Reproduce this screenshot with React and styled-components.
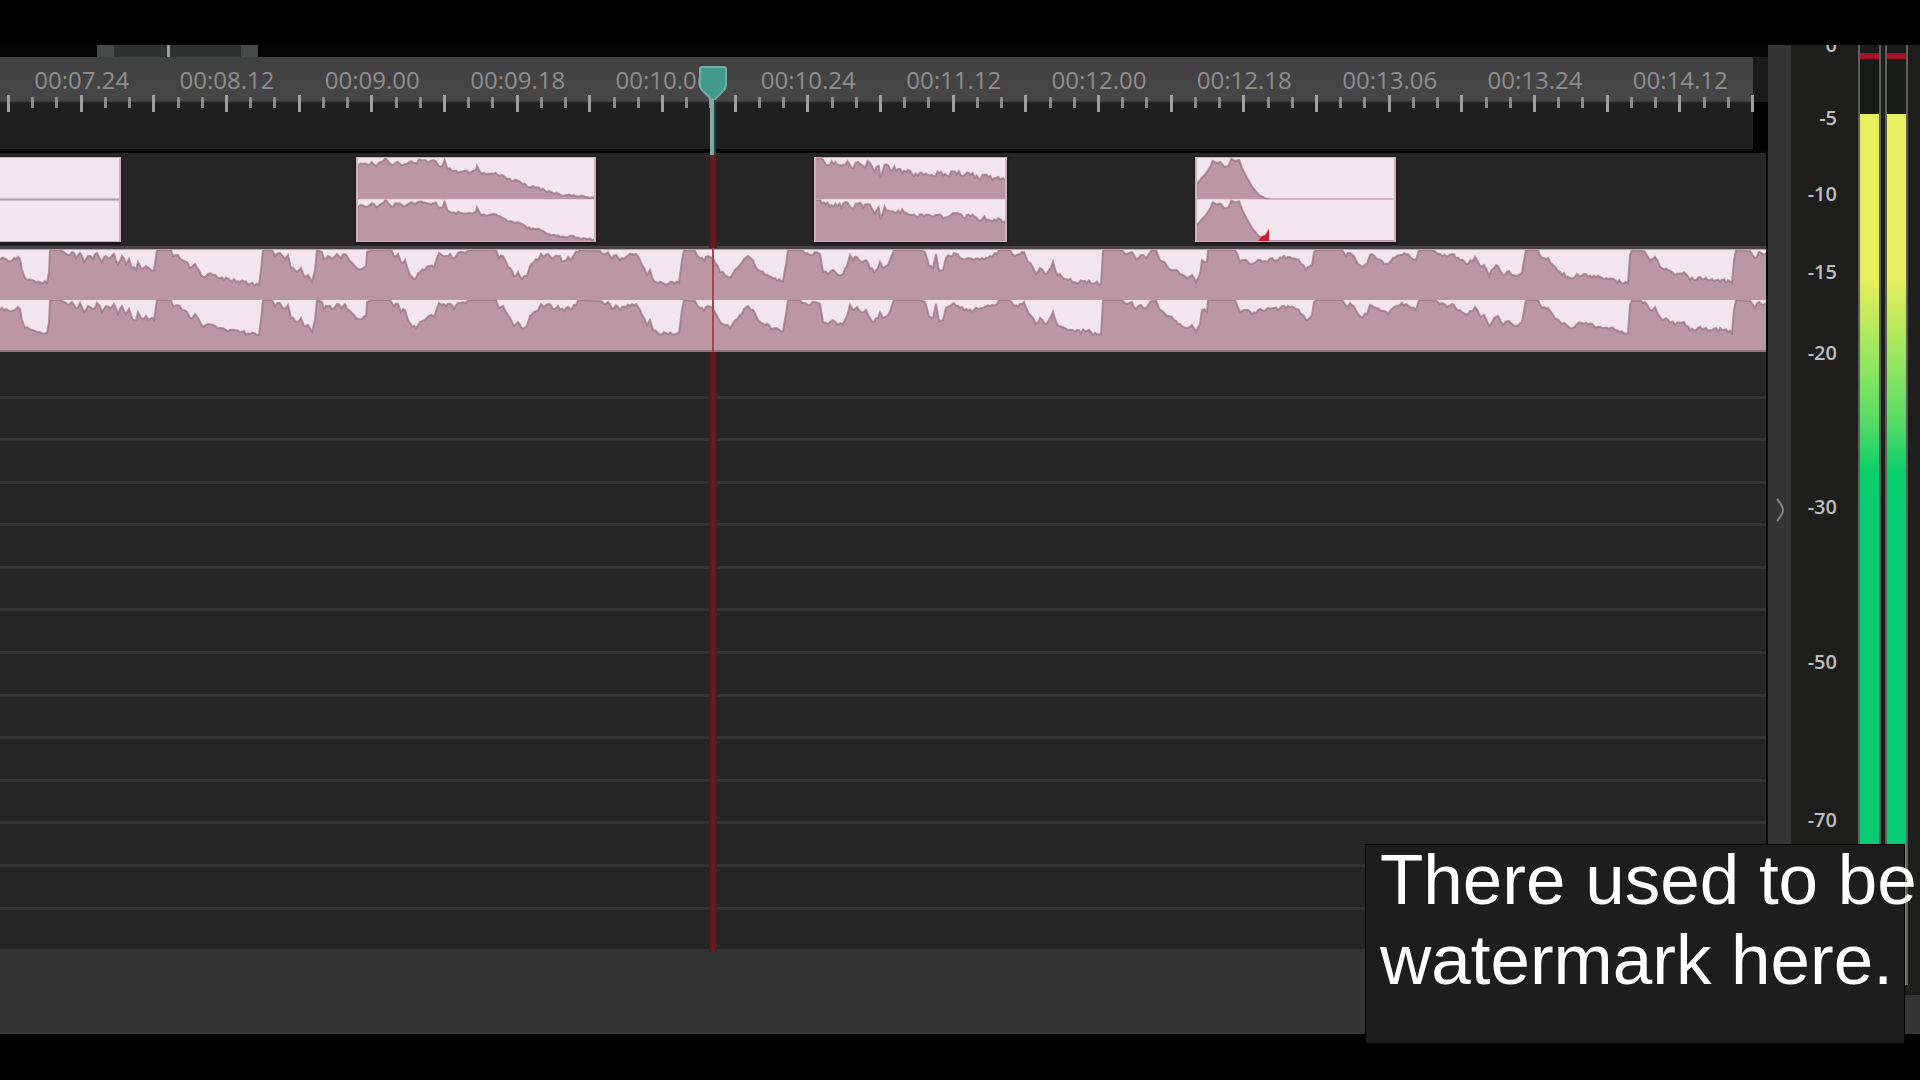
import React from "react";
import styled, { createGlobalStyle } from "styled-components";

const GlobalStyle = createGlobalStyle`
  * {
    box-sizing: border-box;
  }

  body {
    margin: 0;
    background: #000;
    font-family: "Open Sans", "Noto Sans", sans-serif;
  }
`;

const Page = styled.div`
  position: relative;
  display: flex;
  flex-direction: column;
  min-height: 100vh;
  padding: 45px 0 46px;
  background: #000;
  overflow: hidden;
`;

const Editor = styled.main`
  flex: 1;
  display: grid;
  grid-template-columns: 1fr 23px 129px;
  background: #353535;
`;

const Timeline = styled.section`
  position: relative;
  display: flex;
  flex-direction: column;
  min-width: 0;
  background: #060606;
`;

const Overview = styled.div`
  display: grid;
  grid-template-columns: 97fr 161fr 1510fr;
  height: 12px;
`;

const OverviewRange = styled.div`
  grid-column: 2;
  display: flex;
  justify-content: space-between;
  background: #303232;
`;

const Handle = styled.span`
  width: ${(props) => (props.$thin ? "3px" : "17px")};
  margin-right: ${(props) => (props.$thin ? "18px" : "0")};
  background: ${(props) => (props.$thin ? "#9a9a9a" : "#484a49")};
`;

const RulerRow = styled.div`
  display: flex;
  height: 92px;
  padding-right: 14px;
  background: linear-gradient(#1b1b1b 45px, #030303 45px);
`;

const Ruler = styled.div`
  flex: 1;
  display: grid;
  grid-template-columns: 9fr repeat(12, 145fr);
  background: linear-gradient(#414141, #464646 44px, #1f1f1f 46px);
`;

const RulerCell = styled.div`
  display: flex;
  flex-direction: column;
  align-items: center;
  min-width: 0;
`;

const Time = styled.span`
  height: 38px;
  line-height: 46px;
  font-size: 24px;
  color: #8e8e8e;
`;

const Ticks = styled.div`
  align-self: stretch;
  display: grid;
  grid-template-columns: repeat(6, 1fr);
`;

const Tick = styled.span`
  width: 3px;
  height: ${(props) => (props.$major ? "17px" : "11px")};
  margin-top: ${(props) => (props.$major ? "0" : "2px")};
  margin-left: -2px;
  background: ${(props) => (props.$major ? "#a0a0a0" : "#8a8a8a")};
`;

const LastTick = styled(Tick)`
  margin-top: 38px;
`;

const Tracks = styled.div`
  flex: 1;
  display: flex;
  flex-direction: column;
  margin-right: 2px;
  border-top: 4px solid #050505;
  background: #262626;
`;

const ClipTrack = styled.div`
  display: grid;
  grid-template-columns: 121fr 235fr 240fr 218fr 193fr 188fr 201fr 370fr;
  grid-template-rows: minmax(0, 1fr);
  height: 96px;
  padding: 4px 0 4px;
  border-bottom: 3px solid #4a4345;
`;

const Clip = styled.div`
  grid-column: ${(props) => props.$column};
  position: relative;
  border: solid #c9b4bd;
  border-width: ${(props) => (props.$cut ? "1px 2px 1px 0" : "1px 2px")};
  background: #f2e5ec;
  box-shadow: 0 1px 3px #150b10;
`;

const MusicTrack = styled.div`
  height: 103px;
  border-top: 1px solid #bca5ae;
  border-bottom: 2px solid #8f7480;
  background: #f2e5ec;
`;

const WaveSvg = styled.svg`
  display: block;
  width: 100%;
  height: 100%;
`;

const ClipMark = styled.svg`
  position: absolute;
  left: 31%;
  bottom: 0;
  width: 12px;
  height: 12px;
`;

const Lanes = styled.div`
  flex: 1;
  display: flex;
  flex-direction: column;
  padding-top: 4px;
`;

const Lane = styled.div`
  flex: 1;
  border-bottom: 3px solid #353535;
`;

const TimelineFooter = styled.div`
  height: 82px;
  background: #353535;
`;

const Playhead = styled.div`
  position: absolute;
  left: 40.3%;
  top: 21px;
  bottom: 82px;
  width: 30px;
  margin-left: -15px;
  display: flex;
  flex-direction: column;
  align-items: center;
  pointer-events: none;
`;

const HeadSvg = styled.svg`
  display: block;
  flex: none;
  width: 30px;
  height: 34px;
`;

const Stem = styled.span`
  width: 6px;
  height: 55px;
  border-right: 2px solid #1d4443;
  background: #85a5a3;
`;

const RedLine = styled.span`
  flex: ${(props) => (props.$height ? "none" : "1")};
  height: ${(props) => props.$height || "auto"};
  width: ${(props) => (props.$thin ? "2px" : "8px")};
  background: ${(props) =>
    props.$thin ? "#b03f58" : "linear-gradient(90deg, #3c2022, #741a22, #3c2022)"};
`;

const Splitter = styled.button`
  display: flex;
  align-items: center;
  justify-content: center;
  padding: 0 0 59px;
  border: 0;
  background: #353535;
  color: #858585;
`;

const MeterPanel = styled.aside`
  display: flex;
  flex-direction: column;
`;

const MeterBody = styled.div`
  flex: 1;
  display: flex;
  background: #1e1f1d;
`;

const Scale = styled.div`
  display: flex;
  flex-direction: column;
  width: 46px;
  margin-right: 21px;
  overflow: hidden;
`;

const ScaleStep = styled.div`
  flex: ${(props) => props.$size} 1 0;
  display: flex;
  align-items: flex-end;
  justify-content: flex-end;
  min-height: 0;
`;

const ScaleLabel = styled.span`
  height: 24px;
  line-height: 24px;
  font-size: 20px;
  font-weight: 600;
  color: #bdbdbd;
`;

const Bars = styled.div`
  display: flex;
  gap: 4px;
  margin-bottom: 10px;
`;

const Bar = styled.div`
  display: flex;
  flex-direction: column;
  width: 23px;
  padding-top: 8px;
  border: solid #5e5f5c;
  border-width: 0 2px;
  background: #191b19;
`;

const Peak = styled.span`
  height: 6px;
  background: #a3122a;
`;

const Level = styled.span`
  flex: 1;
  margin-top: 55px;
  background: linear-gradient(
    #e6ef5e 0,
    #e6ef5e 19%,
    #c5ea5c 23%,
    #8fe660 29%,
    #4fda66 36%,
    #0bcf6c 41%,
    #06cb72 46%
  );
`;

const PanelFooter = styled.div`
  height: 39px;
  background: #353535;
`;

const Notice = styled.aside`
  position: absolute;
  right: 15px;
  bottom: 36px;
  display: flex;
  align-items: center;
  width: 540px;
  height: 200px;
  padding: 0 0 48px 14px;
  border: 1px solid #000;
  background: #1d1d1d;
`;

const NoticeText = styled.p`
  margin: 0;
  color: #fff;
  font-family: "Liberation Sans", Arial, sans-serif;
  font-size: 71px;
  line-height: 80px;
  white-space: nowrap;
`;

const times = [
  "00:07.24",
  "00:08.12",
  "00:09.00",
  "00:09.18",
  "00:10.06",
  "00:10.24",
  "00:11.12",
  "00:12.00",
  "00:12.18",
  "00:13.06",
  "00:13.24",
  "00:14.12",
];

// size is the share of the scale between a level and the one above it
const levels = [
  { label: "0", size: 12 },
  { label: "-5", size: 73 },
  { label: "-10", size: 76 },
  { label: "-15", size: 78 },
  { label: "-20", size: 81 },
  { label: "-30", size: 154 },
  { label: "-50", size: 155 },
  { label: "-70", size: 158 },
  { label: "", size: 163 },
];

// "x,depth" pairs, depth is measured down from the top of a channel
const fadeOut =
  "0,8 5,6 10,7 14,4 19,8 24,4 28,0 31,4 34,7 40,4 46,7 52,4 58,5 64,2 72,4 79,3 82,8 86,8 88,2 91,11 98,13 106,14 115,14 120,12 121,8 124,14 132,16 140,15 150,20 158,23 165,24 172,29 180,30 190,33 200,36 210,38 215,37 225,39 240,40";

const sustained =
  "0,0 8,3 14,7 20,4 26,8 32,3 38,10 43,4 48,8 55,5 60,14 64,8 66,20 70,7 76,12 84,11 90,13 98,16 108,15 118,17 126,15 134,18 142,14 150,18 158,17 166,21 172,17 180,22 186,19 193,22";

const burst =
  "0,26 5,20 8,17 11,13 14,8 16,3 20,5 24,4 28,9 32,8 35,1 39,3 43,2 46,10 51,20 57,30 63,37 70,41 76,42 201,42";

const music =
  "0,10 6,9 12,11 18,7 20,9 22,20 25,28 32,30 40,32 47,33 49,22 50,0 60,0 64,2 68,5 72,2 76,8 80,3 84,12 88,6 93,9 97,3 102,12 106,6 110,8 114,4 118,14 122,6 126,14 129,9 132,18 136,20 138,12 141,18 146,16 150,19 154,20 157,0 171,0 173,6 178,5 182,10 187,12 190,18 195,14 199,20 203,27 208,24 213,25 220,28 230,30 240,32 250,34 259,35 261,20 263,0 272,0 275,6 280,3 285,9 288,5 291,18 297,22 301,18 304,26 308,25 312,32 315,20 317,0 322,2 324,9 328,6 332,9 337,4 341,8 345,4 349,10 354,15 358,19 " +
  "362,19 366,16 367,2 372,0 390,0 394,6 398,4 401,12 405,10 408,20 412,27 416,28 420,22 425,20 429,16 434,17 437,8 439,3 442,5 446,6 450,4 454,9 458,3 463,2 470,0 496,0 499,8 503,6 506,12 510,18 514,26 518,22 522,29 527,26 530,16 534,12 538,10 541,4 544,7 548,4 553,9 558,6 564,11 568,7 571,10 574,5 580,0 600,1 604,4 608,2 612,9 616,5 620,10 626,7 632,4 636,4 640,10 644,18 647,25 650,20 653,30 658,33 668,34 679,33 682,10 684,0 695,1 700,8 704,11 708,6 " +
  "713,9 716,14 720,22 725,25 730,28 735,20 740,15 744,9 748,6 753,10 758,20 765,25 775,28 783,31 786,14 788,0 800,0 805,3 810,5 815,2 820,4 823,22 828,24 833,20 838,25 843,24 847,16 850,5 853,10 857,7 861,12 866,10 870,18 874,22 878,18 880,12 883,18 888,15 892,5 894,0 920,0 925,2 929,16 933,18 936,4 939,21 943,20 946,8 950,6 954,3 960,8 966,9 974,10 982,8 990,6 997,4 999,0 1010,0 1014,6 1020,4 1024,2 1028,12 1033,18 1036,24 1040,18 1045,24 1049,20 1053,12 1056,22 1062,27 1068,30 " +
  "1075,32 1085,31 1095,33 1101,34 1103,0 1122,0 1127,4 1132,2 1136,9 1141,5 1146,8 1150,2 1156,0 1160,10 1167,16 1174,20 1180,24 1187,28 1192,25 1196,32 1200,24 1202,10 1207,12 1208,0 1235,0 1240,12 1246,10 1252,14 1258,10 1265,11 1272,8 1278,10 1284,6 1290,7 1296,9 1301,14 1306,20 1312,15 1314,2 1316,0 1342,0 1346,6 1350,3 1354,6 1358,14 1363,17 1367,14 1370,5 1376,8 1382,11 1388,14 1393,8 1400,5 1406,4 1411,8 1416,10 1419,0 " +
  "1432,0 1440,4 1447,7 1452,4 1460,10 1468,14 1475,7 1480,16 1484,15 1489,26 1494,18 1498,16 1503,25 1509,21 1516,26 1522,22 1525,5 1526,0 1538,0 1542,8 1548,8 1553,15 1560,22 1570,28 1577,24 1584,24 1600,27 1615,30 1628,33 1630,5 1632,0 1645,2 1650,10 1655,7 1660,17 1668,20 1675,25 1684,22 1690,30 1700,27 1710,30 1722,30 1732,33 1734,10 1736,0 1750,1 1755,8 1759,2 1763,5 1766,3";

// Adds small peaks between the points, different for each seed
const addPeaks = (points, seed, size) => {
  let state = seed;
  const random = () => {
    state = (state * 16807) % 2147483647;
    return state / 2147483647 - 0.5;
  };
  const list = points.split(" ").map((pair) => pair.split(",").map(Number));
  const result = [];

  list.forEach(([x, y], i) => {
    result.push(`${x},${y}`);
    const next = list[i + 1];
    if (!next) return;
    const steps = Math.floor((next[0] - x) / 2);
    for (let n = 1; n < steps; n++) {
      const part = n / steps;
      const depth = y + (next[1] - y) * part;
      const noise = depth > 1 ? random() * size : 0;
      result.push(
        `${(x + (next[0] - x) * part).toFixed(1)},${Math.max(0, depth + noise).toFixed(1)}`
      );
    }
  });

  return result.join(" ");
};

const Wave = ({ points, width, channel, peaks = 4 }) => {
  return (
    <WaveSvg
      viewBox={`0 0 ${width} ${channel * 2}`}
      preserveAspectRatio="none"
      aria-hidden="true"
    >
      {[0, channel].map((top) => {
        const line = addPeaks(points, top + 17, peaks);
        return (
          <svg key={top} y={top} width={width} height={channel}>
            <polygon
              points={`0,${channel} ${line} ${width},${channel}`}
              fill="#ba97a3"
            />
            <polyline
              points={line}
              fill="none"
              stroke="#966f7d"
              strokeOpacity="0.7"
              strokeWidth="2"
            />
          </svg>
        );
      })}
    </WaveSvg>
  );
};

const Silence = () => (
  <WaveSvg viewBox="0 0 100 84" preserveAspectRatio="none" aria-hidden="true">
    <path d="M0 42h100" stroke="#aaa0a5" strokeWidth="2" />
  </WaveSvg>
);

const PlayheadMarker = () => (
  <Playhead>
    <HeadSvg viewBox="0 0 30 34" aria-hidden="true">
      <path
        d="M4 1h22q2 0 2 2v16q0 4-4 7l-5 5q-2 2-2 3h-4q0-1-2-3l-5-5q-4-3-4-7V3q0-2 2-2z"
        fill="#429a8b"
        stroke="#79aaa1"
        strokeWidth="2"
      />
    </HeadSvg>
    <Stem />
    <RedLine $height="93px" />
    <RedLine $thin $height="104px" />
    <RedLine />
  </Playhead>
);

const App = () => {
  return (
    <Page>
      <GlobalStyle />
      <Editor>
        <Timeline>
          <Overview>
            <OverviewRange>
              <Handle />
              <Handle $thin />
              <Handle />
            </OverviewRange>
          </Overview>
          <RulerRow>
            <Ruler>
              <span />
              {times.map((time) => (
                <RulerCell key={time}>
                  <Time>{time}</Time>
                  <Ticks>
                    {[0, 1, 2, 3, 4, 5].map((n) => (
                      <Tick key={n} $major={n % 3 === 0} />
                    ))}
                  </Ticks>
                </RulerCell>
              ))}
            </Ruler>
            <LastTick $major />
          </RulerRow>
          <Tracks>
            <ClipTrack>
              <Clip $column={1} $cut>
                <Silence />
              </Clip>
              <Clip $column={3}>
                <Wave points={fadeOut} width={240} channel={42} peaks={3} />
              </Clip>
              <Clip $column={5}>
                <Wave points={sustained} width={193} channel={42} peaks={6} />
              </Clip>
              <Clip $column={7}>
                <Wave points={burst} width={201} channel={42} peaks={0} />
                <ClipMark viewBox="0 0 12 12" aria-hidden="true">
                  <path d="M0 12L4 7L7 6L11 0V12z" fill="#c81d38" />
                </ClipMark>
              </Clip>
            </ClipTrack>
            <MusicTrack>
              <Wave points={music} width={1766} channel={50} />
            </MusicTrack>
            <Lanes>
              {Array.from({ length: 14 }, (_, i) => (
                <Lane key={i} />
              ))}
            </Lanes>
          </Tracks>
          <TimelineFooter />
          <PlayheadMarker />
        </Timeline>
        <Splitter type="button" aria-label="Collapse panel">
          <svg width="10" height="24" viewBox="0 0 10 24" aria-hidden="true">
            <path
              d="M2 1q6 7 6 11t-6 11"
              fill="none"
              stroke="currentColor"
              strokeWidth="2"
            />
          </svg>
        </Splitter>
        <MeterPanel>
          <MeterBody>
            <Scale>
              {levels.map(({ label, size }) => (
                <ScaleStep key={size} $size={size}>
                  {label && <ScaleLabel>{label}</ScaleLabel>}
                </ScaleStep>
              ))}
            </Scale>
            <Bars>
              <Bar>
                <Peak />
                <Level />
              </Bar>
              <Bar>
                <Peak />
                <Level />
              </Bar>
            </Bars>
          </MeterBody>
          <PanelFooter />
        </MeterPanel>
      </Editor>
      <Notice>
        <NoticeText>
          There used to be
          <br />
          watermark here.
        </NoticeText>
      </Notice>
    </Page>
  );
};

export default App;
